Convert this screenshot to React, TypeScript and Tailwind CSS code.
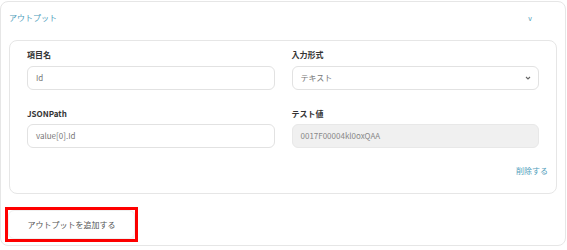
import React from 'react';

export default function App() {
  const font = { fontFamily: '"Noto Sans CJK JP", "Noto Sans", sans-serif' };
  return (
    <div className="w-[567px] h-[250px] bg-white" style={font}>
      <div className="mt-[1px] w-[566px] h-[245px] border border-[#e6e6e6] rounded-[8px] bg-white">
        {/* Header */}
        <div className="h-[38px] flex items-start justify-between pl-[8px] pr-[33px] pt-[10px]">
          <span className="text-[8px] leading-[12px] text-[#4f9dbb]">アウトプット</span>
          <span className="text-[7px] leading-[12px] text-[#4f9dbb]">v</span>
        </div>

        {/* Output item */}
        <div className="px-[8px]">
          <div className="h-[154px] border border-[#e6e6e6] rounded-[8px] pt-[8px] px-[17px]">
            <div className="grid grid-cols-2 gap-x-[17px]">
              <div>
                <div className="text-[8px] leading-[12px] font-bold text-[#333]">項目名</div>
                <div className="mt-[5px] h-[24px] border border-[#e2e2e2] rounded-[6px] flex items-center px-[8px] text-[8px] text-[#777]">Id</div>
              </div>
              <div>
                <div className="text-[8px] leading-[12px] font-bold text-[#333]">入力形式</div>
                <div className="mt-[5px] h-[24px] border border-[#e2e2e2] rounded-[6px] flex items-center justify-between px-[8px] text-[8px] text-[#777]">
                  <span>テキスト</span>
                  <svg width="6" height="4" viewBox="0 0 6 4" className="mr-[-1px]">
                    <path d="M1 1 L3 3 L5 1" stroke="#666" strokeWidth="1.1" fill="none" />
                  </svg>
                </div>
              </div>
              <div className="mt-[18px]">
                <div className="text-[8px] leading-[12px] font-bold text-[#333]">JSONPath</div>
                <div className="mt-[4px] h-[24px] border border-[#e2e2e2] rounded-[6px] flex items-center px-[8px] text-[8px] text-[#777]">value[0].Id</div>
              </div>
              <div className="mt-[18px]">
                <div className="text-[8px] leading-[12px] font-bold text-[#333]">テスト値</div>
                <div className="mt-[4px] h-[24px] border border-[#e8e8e8] bg-[#f0f0f0] rounded-[6px] flex items-center px-[8px] text-[8px] text-[#888]">0017F00004kl0oxQAA</div>
              </div>
            </div>
            <div className="mt-[17px] flex justify-end">
              <span className="text-[8px] leading-[12px] text-[#4f9dbb] mr-[-9px]">削除する</span>
            </div>
          </div>
        </div>

        {/* Add button */}
        <div className="mt-[13px] pl-[4px]">
          <div className="w-[133px] h-[35px] border-[3px] border-[#ff0000] bg-white">
            <button className="w-[127px] h-[29px] rounded-[6px] border border-[#f0f0f0] shadow-[1px_1px_2px_rgba(0,0,0,0.06)] flex items-center justify-center text-[8px] text-[#555]" style={font}>
              アウトプットを追加する
            </button>
          </div>
        </div>
      </div>
    </div>
  );
}
